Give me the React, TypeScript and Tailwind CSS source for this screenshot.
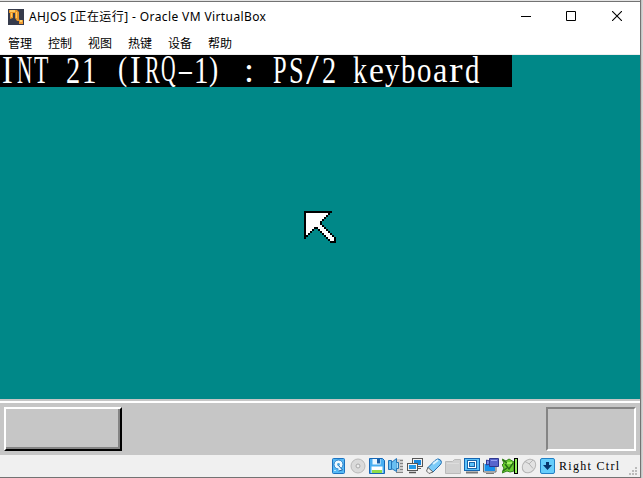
import React from "react";

type Glyph = { c: string; cls: string };

const banner: Glyph[] = [
  { c: "I", cls: "w-[8px] left-[1px] scale-x-[1.35] scale-y-[1.65]" },
  { c: "N", cls: "w-[17.3px] scale-x-[0.88] scale-y-[1.65]" },
  { c: "T", cls: "w-[14.7px] left-[1px] scale-x-[0.98] scale-y-[1.65]" },
  { c: " ", cls: "w-4" },
  { c: "2", cls: "w-3 left-[1px] scale-x-[1.18] scale-y-[1.6]" },
  { c: "1", cls: "w-3 left-[1px] scale-x-[1.2] scale-y-[1.6]" },
  { c: " ", cls: "w-4" },
  { c: "(", cls: "w-2 left-[5px] scale-x-[1.15] scale-y-[1.4] -translate-y-px" },
  { c: "I", cls: "w-[8px] left-[1px] scale-x-[1.35] scale-y-[1.65]" },
  { c: "R", cls: "w-4 scale-x-[0.91] scale-y-[1.65]" },
  { c: "Q", cls: "w-[17.3px] scale-x-[0.84] scale-y-[1.58] -translate-y-px" },
  { c: "-", cls: "w-2 scale-x-[2.1] scale-y-[1.1] -translate-y-px" },
  { c: "1", cls: "w-3 left-[1px] scale-x-[1.2] scale-y-[1.6]" },
  { c: ")", cls: "w-2 scale-x-[1.15] scale-y-[1.4] -translate-y-px" },
  { c: " ", cls: "w-4" },
  { c: ":", cls: "w-[6.7px] left-[3px] scale-x-[1.5] scale-y-[1.5]" },
  { c: " ", cls: "w-4" },
  { c: "P", cls: "w-[13.3px] scale-x-[1.02] scale-y-[1.65]" },
  { c: "S", cls: "w-[13.3px] scale-x-[1.1] scale-y-[1.6]" },
  { c: "/", cls: "w-[6.7px] left-[1px] scale-x-[1.9] scale-y-[1.75]" },
  { c: "2", cls: "w-3 left-[1px] scale-x-[1.18] scale-y-[1.6]" },
  { c: " ", cls: "w-4" },
  { c: "k", cls: "w-3 scale-x-[1.17] scale-y-[1.62]" },
  { c: "e", cls: "w-[10.7px] scale-x-[1.4] scale-y-[1.5]" },
  { c: "y", cls: "w-3 scale-x-[1.2] scale-y-[1.32] -translate-y-px" },
  { c: "b", cls: "w-3 scale-x-[1.2] scale-y-[1.62]" },
  { c: "o", cls: "w-3 scale-x-[1.2] scale-y-[1.5]" },
  { c: "a", cls: "w-[10.7px] scale-x-[1.35] scale-y-[1.5]" },
  { c: "r", cls: "w-2 scale-x-[1.7] scale-y-[1.5]" },
  { c: "d", cls: "w-3 scale-x-[1.2] scale-y-[1.62]" },
];

const menus = ["管理", "控制", "视图", "热键", "设备", "帮助"];

const cursor = [
  "**************..",
  "*OOOOOOOOOOO*...",
  "*OOOOOOOOOO*....",
  "*OOOOOOOOO*.....",
  "*OOOOOOOO*......",
  "*OOOOOOO*.......",
  "*OOOOOOO*.......",
  "*OOOOOOOO*......",
  "*OOOO**OOO*.....",
  "*OOO*..*OOO*....",
  "*OO*....*OOO*...",
  "*O*......*OOO*..",
  "**........*OOO*.",
  "*..........*OOO*",
  "............*OO*",
  ".............***",
];

function Cursor() {
  return (
    <svg className="h-8 w-8" viewBox="0 0 16 16" shapeRendering="crispEdges">
      {cursor.flatMap((row, y) =>
        row.split("").map((p, x) =>
          p === "." ? null : <rect key={`${x}-${y}`} x={x} y={y} width="1" height="1" fill={p === "*" ? "#000" : "#fff"} />
        )
      )}
    </svg>
  );
}

function Icon({ children }: { children: React.ReactNode }) {
  return (
    <svg className="h-4 w-4 shrink-0" viewBox="0 0 16 16" fill="none">
      {children}
    </svg>
  );
}

function StatusIcons() {
  return (
    <div className="flex gap-[3px]">
      <Icon>
        <rect x="1.5" y=".5" width="12" height="15" rx="1" fill="#55b8f5" stroke="#1d72c0" />
        <circle cx="7.5" cy="6.5" r="4.5" fill="#f0faff" stroke="#2b80c8" />
        <circle cx="7.5" cy="6.5" r="1.4" fill="#4aa3dd" />
        <path d="M7.5 7.5l4 4.5-4 1" fill="#e8f7ff" stroke="#1d64ab" />
        <path d="M3 12.5h2" stroke="#bce8ff" />
      </Icon>
      <Icon>
        <circle cx="8" cy="8" r="7" fill="#dadada" stroke="#b9b9b9" />
        <circle cx="8" cy="8" r="2" fill="#eee" stroke="#a8a8a8" />
      </Icon>
      <Icon>
        <path d="M.5.5h13l2 2v13H.5z" fill="#48aef2" stroke="#1565b4" />
        <path d="M3.5 1h8v5.5h-8z" fill="#eaf7ff" />
        <path d="M8 1h3v4.5H8z" fill="#1b5fa8" />
        <path d="M2.5 8.5h11V15h-11z" fill="#fff" />
        <path d="M3 12h10v3H3z" fill="#8fdc48" />
      </Icon>
      <Icon>
        <path d="M8 1h7v14H8z" fill="#cfcfcf" />
        <path d="M12 2.5h3M12 5.5h3M12 8.5h3M12 11.5h3M8 14.5h7" stroke="#858585" />
        <path d="M.5 2.5h3v9h-3zM3.5 4.5L8.5.5v13l-5-3z" fill="#68bff2" stroke="#2474b8" />
        <path d="M8.5 4.5h2v6h-2" fill="#a8e2ff" stroke="#2374b1" />
      </Icon>
      <Icon>
        <rect x="5.5" y=".5" width="10" height="8" fill="#f1f1f1" stroke="#555" />
        <rect x="7" y="2" width="7" height="5" fill="#1785dc" />
        <path d="M8 10.5h6" stroke="#666" />
        <rect x=".5" y="5.5" width="10" height="7" fill="#f4f4f4" stroke="#555" />
        <rect x="2" y="7" width="7" height="4" fill="#2599e8" />
        <path d="M2 14.5h7" stroke="#555" strokeWidth="1.5" />
      </Icon>
      <Icon>
        <path d="M1.5 10L9 2.5Q12-.5 14.5 2t-.5 5L7 14z" fill="#7bcbf8" stroke="#236dae" />
        <path d="M2 9.5L.5 13l2.5 2.5L7 14z" fill="#f2f2f2" stroke="#666" />
        <path d="M7 6l5-4" stroke="#d8f3ff" strokeWidth="2" />
      </Icon>
      <Icon>
        <path d="M.5 15.5v-12h7l2-2h6v14z" fill="#d1d1d1" stroke="#bababa" />
        <path d="M2 5.5h12" stroke="#ddd" />
      </Icon>
      <Icon>
        <rect x=".5" y=".5" width="15" height="12" fill="#5cc2fb" stroke="#1565b0" />
        <rect x="3.5" y="2.5" width="9" height="8" fill="#fff" stroke="#1763a8" />
        <rect x="5.5" y="4.5" width="5" height="4" fill="#5cc2fb" stroke="#1763a8" />
        <path d="M2 14.5h12" stroke="#777" strokeWidth="2" />
      </Icon>
      <Icon>
        <rect x="1" y="5.5" width="11.5" height="8" fill="#1690ec" stroke="#e8e8e8" />
        <path d="M.5 5v9h12.5V9" stroke="#666" />
        <path d="M6.5.5h9v8h-9z" fill="#5865cc" stroke="#2e378f" />
        <path d="M3.5 2l3 1v3l-3 1z" fill="#7b88e5" stroke="#2e378f" />
        <path d="M8 2.5h6" stroke="#969ff2" />
        <path d="M3 15.5h8" stroke="#777" />
      </Icon>
      <Icon>
        <path d="M0 1l4 2 3-2 5 3v9l-4 1-3-1-5 2 2-5-2-3 2-2z" fill="#6acb31" stroke="#34831a" />
        <path d="M3 6l4 5 4-6M1 13l4-3M1 2l4 3" stroke="#276c16" strokeWidth="1.5" />
        <path d="M5 5h5" stroke="#b6ff73" strokeWidth="1.5" />
        <rect x="12.5" y=".5" width="3" height="15" fill="#93ef5d" stroke="#000" />
      </Icon>
      <Icon>
        <ellipse cx="8" cy="8" rx="6" ry="7.5" transform="rotate(43 8 8)" fill="#e2e2e2" stroke="#b4b4b4" />
        <path d="M4 3.5q4 1 8 7M8 6l4-4" stroke="#b4b4b4" />
      </Icon>
      <Icon>
        <rect x=".5" y=".5" width="14" height="15" rx="1.5" fill="#65cdfb" stroke="#2380c4" />
        <path d="M6 4h3v3h3l-4.5 5L3 7h3z" fill="#07366e" />
      </Icon>
    </div>
  );
}

export default function App() {
  return (
    <div className="flex h-[478px] w-[643px] overflow-hidden bg-[#dadada] font-['Noto_Sans','Noto_Sans_CJK_SC',sans-serif]">
      <main className="flex h-[478px] w-[641px] flex-col border-r border-b border-[#737373] bg-white">
        <div className="h-px shrink-0 bg-[#e4e4e4]" />
        <header className="flex h-[31px] shrink-0 items-center border-t border-[#737373] pl-2">
          <svg className="-mt-px h-4 w-4 shrink-0" viewBox="0 0 16 16">
            <path fill="#363b4c" d="M0 0h16v16H0z" />
            <path fill="#e8962a" d="M1 1h8l2 2v7l1 2h-3L7 9V4H5v5l-3 1V4H1z" />
            <path fill="#ffc860" d="M2 1h5v2H2zM3 4h1v4H3zM8 3h1v6H8z" />
            <path fill="#f19a32" d="M11 11h4v4h-4z" />
            <path fill="#ffd36b" d="M12 11h2v2h-2z" />
          </svg>
          <div className="ml-[5px] text-[12px] leading-4 tracking-[0.39px] whitespace-pre text-black">AHJOS [正在运行] - Oracle VM VirtualBox</div>
          <div className="mr-[18px] ml-auto flex h-[11px] -translate-y-px items-center">
            <svg className="mr-[35px] h-[11px] w-[10px]" viewBox="0 0 10 11"><path d="M0 5.5h10" stroke="#000" /></svg>
            <svg className="mr-[36px] h-[10px] w-[10px]" viewBox="0 0 10 10"><path d="M.5.5h9v9h-9z" fill="none" stroke="#000" /></svg>
            <svg className="h-[10px] w-[10px]" viewBox="0 0 10 10"><path d="M0 0l10 10M10 0L0 10" stroke="#000" strokeWidth="1.1" /></svg>
          </div>
        </header>
        <nav className="flex h-[23px] shrink-0 items-center gap-4 border-b border-[#eee] pl-2 font-['Noto_Sans_CJK_SC',sans-serif] text-[12px] text-black">
          {menus.map((m) => <span key={m} className="w-6 whitespace-nowrap">{m}</span>)}
        </nav>
        <section className="flex h-[400px] shrink-0 flex-col bg-[#008888]">
          <div className="flex h-8 w-[512px] shrink-0 bg-black pl-px font-['Liberation_Serif',serif] text-[24px] leading-8 text-white">
            {banner.map((g, i) => (
              <span key={i} className="block h-8 w-4 shrink-0">
                <span className={`relative block origin-[0_18px] whitespace-pre ${g.cls}`}>{g.c}</span>
              </span>
            ))}
          </div>
          <div className="flex flex-1 pt-[124px] pl-[304px]">
            <Cursor />
          </div>
          <div className="flex h-14 shrink-0 flex-col bg-[#c6c6c6]">
            <div className="mt-0.5 h-0.5 bg-white" />
            <div className="flex justify-between px-1 pt-1">
              <div className="h-11 w-[118px] border-2 border-t-white border-r-black border-b-black border-l-white">
                <div className="h-full border-r-2 border-b-2 border-[#848484]" />
              </div>
              <div className="h-11 w-[90px] border-2 border-t-[#848484] border-r-white border-b-white border-l-[#848484]" />
            </div>
          </div>
        </section>
        <footer className="flex h-[22px] shrink-0 items-center bg-[#f0f0f0] pl-[331px]">
          <StatusIcons />
          <span className="ml-[3px] w-[62px] font-['Liberation_Serif',serif] text-[12px] leading-4 tracking-[1.3px] whitespace-nowrap text-black">Right Ctrl</span>
          <svg className="mt-auto mb-[2px] ml-auto mr-[3px] h-[8px] w-[8px]" viewBox="0 0 8 8"><path d="M6 0h2v2H6zM3 3h2v2H3zM6 3h2v2H6zM0 6h2v2H0zM3 6h2v2H3zM6 6h2v2H6z" fill="#bbb" /></svg>
        </footer>
      </main>
      <div className="w-0.5 bg-gradient-to-r from-[#bbb] to-[#ddd]" />
    </div>
  );
}
